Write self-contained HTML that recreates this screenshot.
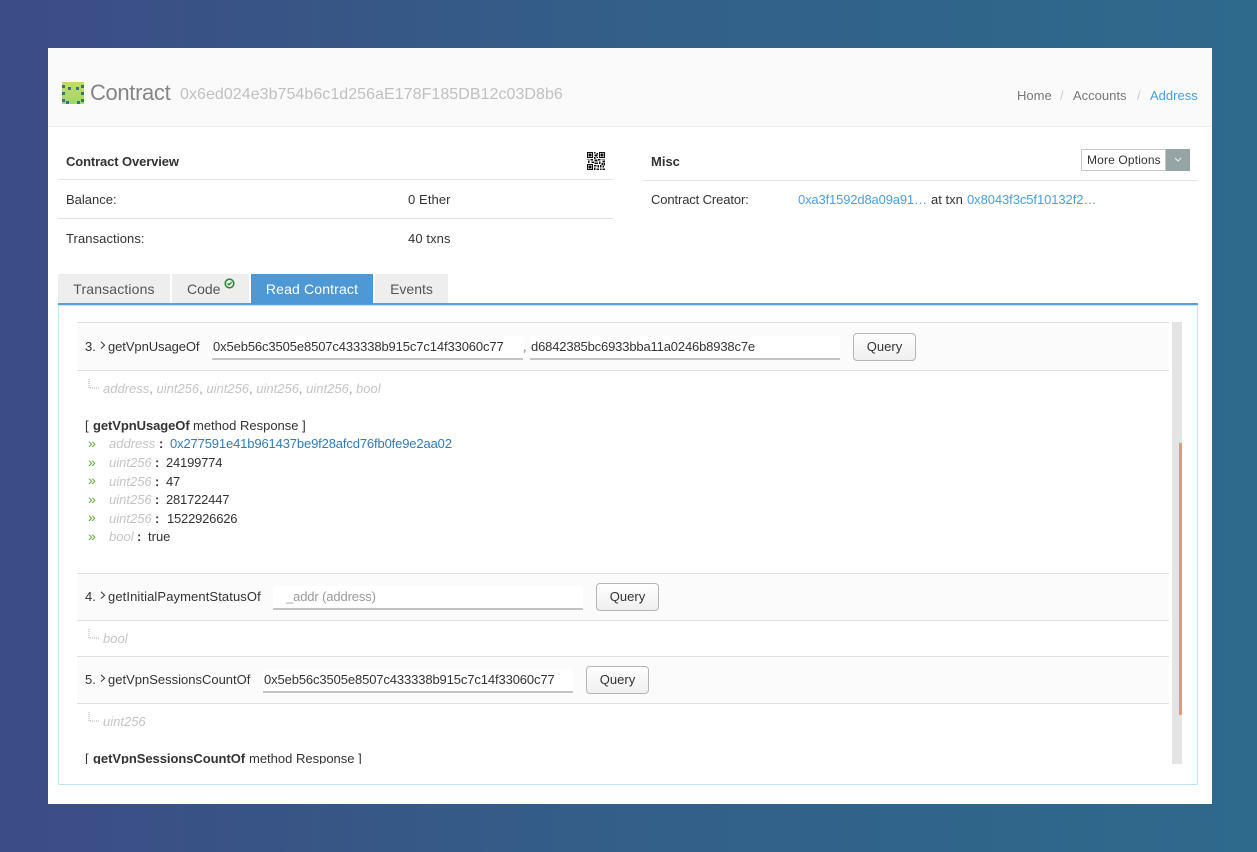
<!DOCTYPE html>
<html><head><meta charset="utf-8">
<style>
html,body{margin:0;padding:0;width:1257px;height:852px;overflow:hidden}
body{background:linear-gradient(90deg,#3c4c85 0%,#335f88 50%,#2d6a8c 100%);font-family:"Liberation Sans",sans-serif;font-size:13px;color:#333;position:relative}
.a{position:absolute;white-space:nowrap}
.l{position:absolute;background:#e2e2e2;height:1px}
a{color:#4d9ddf;text-decoration:none}
.tab{position:absolute;top:274px;height:29px;background:#eee;color:#555;font-size:14px;line-height:30px;text-align:center;letter-spacing:.15px}
.inp{position:absolute;height:22px;line-height:21px;background:#fff;border-bottom:2px solid #c4c4c4;font-size:13px;color:#333;white-space:nowrap;overflow:hidden;letter-spacing:-.12px}
.btn{position:absolute;height:26px;width:61px;border:1px solid #b5b5b5;border-radius:4px;background:linear-gradient(#fff,#efefef);text-align:center;line-height:26px;font-size:13px;color:#333}
.row{position:absolute;left:77px;width:1092px;background:#fbfbfb;border-top:1px solid #e0e0e0;border-bottom:1px solid #e0e0e0}
.t{font-style:italic;color:#c4c4c4}
.ch{position:absolute;color:#5aa536;font-size:14px;line-height:14px}
.v{letter-spacing:-.2px}
</style></head><body>
<div class="a" style="left:48px;top:48px;width:1164px;height:756px;background:#fff"></div>
<div class="a" style="left:48px;top:48px;width:1164px;height:78px;background:#fafafa;border-bottom:1px solid #eee"></div>

<svg class="a" style="left:62px;top:82px;filter:blur(.3px)" width="22" height="22" viewBox="0 0 22 22"><defs><linearGradient id="g" x1="0" y1="0" x2="0" y2="1"><stop offset="0" stop-color="#c8d86a"/><stop offset="1" stop-color="#a0d868"/></linearGradient></defs><rect width="22" height="22" fill="url(#g)"/><g fill="#2f7a78"><rect x="0" y="3" width="3" height="3"/><rect x="19" y="3" width="3" height="3"/><rect x="6" y="5" width="3" height="3"/><rect x="14" y="5" width="3" height="3"/><rect x="0" y="10" width="3" height="3"/><rect x="19" y="10" width="3" height="3"/><rect x="0" y="17" width="3" height="3"/><rect x="19" y="17" width="3" height="3"/><rect x="4" y="19" width="3" height="3"/><rect x="15" y="19" width="3" height="3"/></g></svg>
<div class="a" style="left:90px;top:80px;font-size:22px;line-height:26px;color:#858585;letter-spacing:-.35px">Contract</div>
<div class="a" style="left:180px;top:84px;font-size:16px;line-height:21px;color:#c0c0c0;letter-spacing:.05px">0x6ed024e3b754b6c1d256aE178F185DB12c03D8b6</div>

<div class="a" style="left:1017px;top:88px;line-height:15px;color:#777">Home</div>
<div class="a" style="left:1060px;top:88px;line-height:15px;color:#ccc">/</div>
<div class="a" style="left:1073px;top:88px;line-height:15px;color:#777">Accounts</div>
<div class="a" style="left:1137px;top:88px;line-height:15px;color:#ccc">/</div>
<div class="a" style="left:1150px;top:88px;line-height:15px;color:#4d9ddf">Address</div>

<div class="a" style="left:66px;top:154px;line-height:15px;font-weight:bold;color:#333;letter-spacing:-.12px">Contract Overview</div>
<svg class="a" style="left:587px;top:152px" width="18" height="18" viewBox="0 0 21 21" shape-rendering="crispEdges"><rect width="21" height="21" fill="#fff"/><path fill="#111" fill-rule="evenodd" d="M0 0h7v7H0zM1 1v5h5V1zM2 2h3v3H2zM14 0h7v7h-7zM15 1v5h5V1zM16 2h3v3h-3zM0 14h7v7H0zM1 15v5h5v-5zM2 16h3v3H2z"/><path fill="#111" d="M8 0h2v2H8zM11 1h2v2h-2zM9 3h3v2H9zM8 6h2v2H8zM11 6h2v1h-2zM0 8h3v1H0zM4 8h3v2H4zM1 10h2v3H1zM5 11h3v2H5zM9 9h3v2H9zM13 8h3v2h-3zM17 8h4v1h-4zM14 11h2v3h-2zM18 10h3v2h-3zM9 12h4v2H9zM17 13h2v2h-2zM20 13h1v3h-1zM8 15h3v2H8zM12 15h2v3h-2zM15 15h2v3h-2zM18 16h2v2h-2zM8 18h2v3H8zM11 19h3v2h-3zM15 19h2v2h-2zM18 19h3v2h-3z"/></svg>
<div class="l" style="left:58px;top:179px;width:555px"></div>
<div class="a" style="left:66px;top:192px;line-height:15px">Balance:</div>
<div class="a" style="left:408px;top:192px;line-height:15px;letter-spacing:.1px">0 Ether</div>
<div class="l" style="left:58px;top:218px;width:555px"></div>
<div class="a" style="left:66px;top:231px;line-height:15px;letter-spacing:.08px">Transactions:</div>
<div class="a" style="left:408px;top:231px;line-height:15px;letter-spacing:.1px">40 txns</div>

<div class="a" style="left:651px;top:154px;line-height:15px;font-weight:bold">Misc</div>
<div class="a" style="left:1081px;top:149px;width:83px;height:20px;border:1px solid #c8c8c8;background:#fff;font-size:12px;line-height:20px;text-indent:5px;color:#333;letter-spacing:.15px">More Options</div>
<div class="a" style="left:1166px;top:149px;width:24px;height:22px;background:#95a5a6"></div>
<svg class="a" style="left:1174px;top:157px" width="8" height="6" viewBox="0 0 8 6"><path d="M1 1l3 3 3-3" fill="none" stroke="#e4e9e9" stroke-width="1.2"/></svg>
<div class="l" style="left:643px;top:180px;width:555px"></div>
<div class="a" style="left:651px;top:192px;line-height:15px;letter-spacing:-.12px">Contract Creator:</div>
<div class="a" style="left:798px;top:192px;line-height:15px;letter-spacing:-.15px"><a>0xa3f1592d8a09a91…</a></div>
<div class="a" style="left:931px;top:192px;line-height:15px">at txn</div>
<div class="a" style="left:967px;top:192px;line-height:15px;letter-spacing:-.08px"><a>0x8043f3c5f10132f2…</a></div>

<div class="a" style="left:58px;top:303px;width:1140px;height:2px;background:#5a9fd8"></div>
<div class="tab" style="left:58px;width:112px">Transactions</div>
<div class="tab" style="left:172px;width:77px;text-align:left;text-indent:15px;letter-spacing:0">Code</div>
<svg class="a" style="left:224px;top:278px" width="11" height="11" viewBox="0 0 11 11"><circle cx="5.5" cy="5.5" r="4.3" fill="none" stroke="#2d8a3a" stroke-width="1.6"/><path d="M3.4 5.4l1.6 1.5 2.6-2.7" fill="none" stroke="#2d8a3a" stroke-width="1.4"/></svg>
<div class="tab" style="left:251px;top:274px;height:30px;width:122px;background:#4f98d6;color:#fff">Read Contract</div>
<div class="tab" style="left:375px;width:73px;letter-spacing:0">Events</div>

<div class="a" style="left:58px;top:305px;width:1138px;height:478px;border:1px solid #bfe6f0"></div>

<div class="a" style="left:1172px;top:322px;width:10px;height:442px;background:#e4e4e4"></div>
<div class="a" style="left:1179px;top:443px;width:3px;height:272px;background:#e29a76"></div>

<!-- row 3 -->
<div class="row" style="top:322px;height:47px"></div>
<div class="a" style="left:85px;top:339px;line-height:15px">3.</div>
<svg class="a" style="left:100px;top:341px" width="6" height="9" viewBox="0 0 6 9"><path d="M1 .8l3.6 3.4L1 7.6" fill="none" stroke="#333" stroke-width="1"/></svg>
<div class="a" style="left:108px;top:339px;line-height:15px;letter-spacing:-.08px">getVpnUsageOf</div>
<div class="inp" style="left:212px;top:336px;width:311px;text-indent:1px">0x5eb56c3505e8507c433338b915c7c14f33060c77</div>
<div class="a" style="left:523px;top:339px;line-height:15px;color:#777">,</div>
<div class="inp" style="left:530px;top:336px;width:310px;text-indent:1px;letter-spacing:-.155px">d6842385bc6933bba11a0246b8938c7e</div>
<div class="btn" style="left:853px;top:333px">Query</div>
<svg class="a" style="left:88px;top:379px" width="12" height="12"><path d="M1 0v9h10" fill="none" stroke="#aaa" stroke-dasharray="1 1"/></svg>
<div class="a t" style="left:103px;top:381px;line-height:15px">address<span style="color:#999;font-style:normal">,</span> uint256<span style="color:#999;font-style:normal">,</span> uint256<span style="color:#999;font-style:normal">,</span> uint256<span style="color:#999;font-style:normal">,</span> uint256<span style="color:#999;font-style:normal">,</span> bool</div>

<div class="a" style="left:85px;top:418px;line-height:15px">[</div>
<div class="a" style="left:93px;top:418px;line-height:15px;letter-spacing:-.07px"><b>getVpnUsageOf</b></div>
<div class="a" style="left:193px;top:418px;line-height:15px">method Response ]</div>
<div class="ch" style="left:88px;top:436px">»</div>
<div class="a t" style="left:109px;top:436px;line-height:15px">address</div><b class="a" style="left:159px;top:436px;line-height:15px">:</b>
<div class="a" style="left:170px;top:436px;line-height:15px;color:#337ab7;letter-spacing:-.14px">0x277591e41b961437be9f28afcd76fb0fe9e2aa02</div>
<div class="ch" style="left:88px;top:455px">»</div>
<div class="a t" style="left:109px;top:455px;line-height:15px">uint256</div><b class="a" style="left:155px;top:455px;line-height:15px">:</b>
<div class="a v" style="left:166px;top:455px;line-height:15px">24199774</div>
<div class="ch" style="left:88px;top:473px">»</div>
<div class="a t" style="left:109px;top:474px;line-height:15px">uint256</div><b class="a" style="left:155px;top:474px;line-height:15px">:</b>
<div class="a v" style="left:166px;top:474px;line-height:15px">47</div>
<div class="ch" style="left:88px;top:492px">»</div>
<div class="a t" style="left:109px;top:492px;line-height:15px">uint256</div><b class="a" style="left:155px;top:492px;line-height:15px">:</b>
<div class="a v" style="left:166px;top:492px;line-height:15px">281722447</div>
<div class="ch" style="left:88px;top:510px">»</div>
<div class="a t" style="left:109px;top:511px;line-height:15px">uint256</div><b class="a" style="left:155px;top:511px;line-height:15px">:</b>
<div class="a v" style="left:167px;top:511px;line-height:15px">1522926626</div>
<div class="ch" style="left:88px;top:529px">»</div>
<div class="a t" style="left:109px;top:529px;line-height:15px">bool</div><b class="a" style="left:137px;top:529px;line-height:15px">:</b>
<div class="a" style="left:148px;top:529px;line-height:15px">true</div>

<!-- row 4 -->
<div class="row" style="top:573px;height:46px"></div>
<div class="a" style="left:85px;top:589px;line-height:15px">4.</div>
<svg class="a" style="left:100px;top:591px" width="6" height="9" viewBox="0 0 6 9"><path d="M1 .8l3.6 3.4L1 7.6" fill="none" stroke="#333" stroke-width="1"/></svg>
<div class="a" style="left:108px;top:589px;line-height:15px;letter-spacing:.1px">getInitialPaymentStatusOf</div>
<div class="inp" style="left:273px;top:586px;width:310px;text-indent:13px;color:#999;letter-spacing:-.13px">_addr (address)</div>
<div class="btn" style="left:596px;top:583px">Query</div>
<svg class="a" style="left:88px;top:629px" width="12" height="12"><path d="M1 0v9h10" fill="none" stroke="#aaa" stroke-dasharray="1 1"/></svg>
<div class="a t" style="left:103px;top:631px;line-height:15px">bool</div>

<!-- row 5 -->
<div class="row" style="top:656px;height:46px"></div>
<div class="a" style="left:85px;top:672px;line-height:15px">5.</div>
<svg class="a" style="left:100px;top:674px" width="6" height="9" viewBox="0 0 6 9"><path d="M1 .8l3.6 3.4L1 7.6" fill="none" stroke="#333" stroke-width="1"/></svg>
<div class="a" style="left:108px;top:672px;line-height:15px">getVpnSessionsCountOf</div>
<div class="inp" style="left:263px;top:669px;width:310px;text-indent:1px">0x5eb56c3505e8507c433338b915c7c14f33060c77</div>
<div class="btn" style="left:586px;top:666px">Query</div>
<svg class="a" style="left:88px;top:712px" width="12" height="12"><path d="M1 0v9h10" fill="none" stroke="#aaa" stroke-dasharray="1 1"/></svg>
<div class="a t" style="left:103px;top:714px;line-height:15px">uint256</div>

<div class="a" style="left:85px;top:751px;width:400px;height:13px;overflow:hidden;line-height:15px">[<b style="position:absolute;left:8px;top:0;letter-spacing:-.05px">getVpnSessionsCountOf</b><span style="position:absolute;left:164px;top:0">method Response ]</span></div>
</body></html>
